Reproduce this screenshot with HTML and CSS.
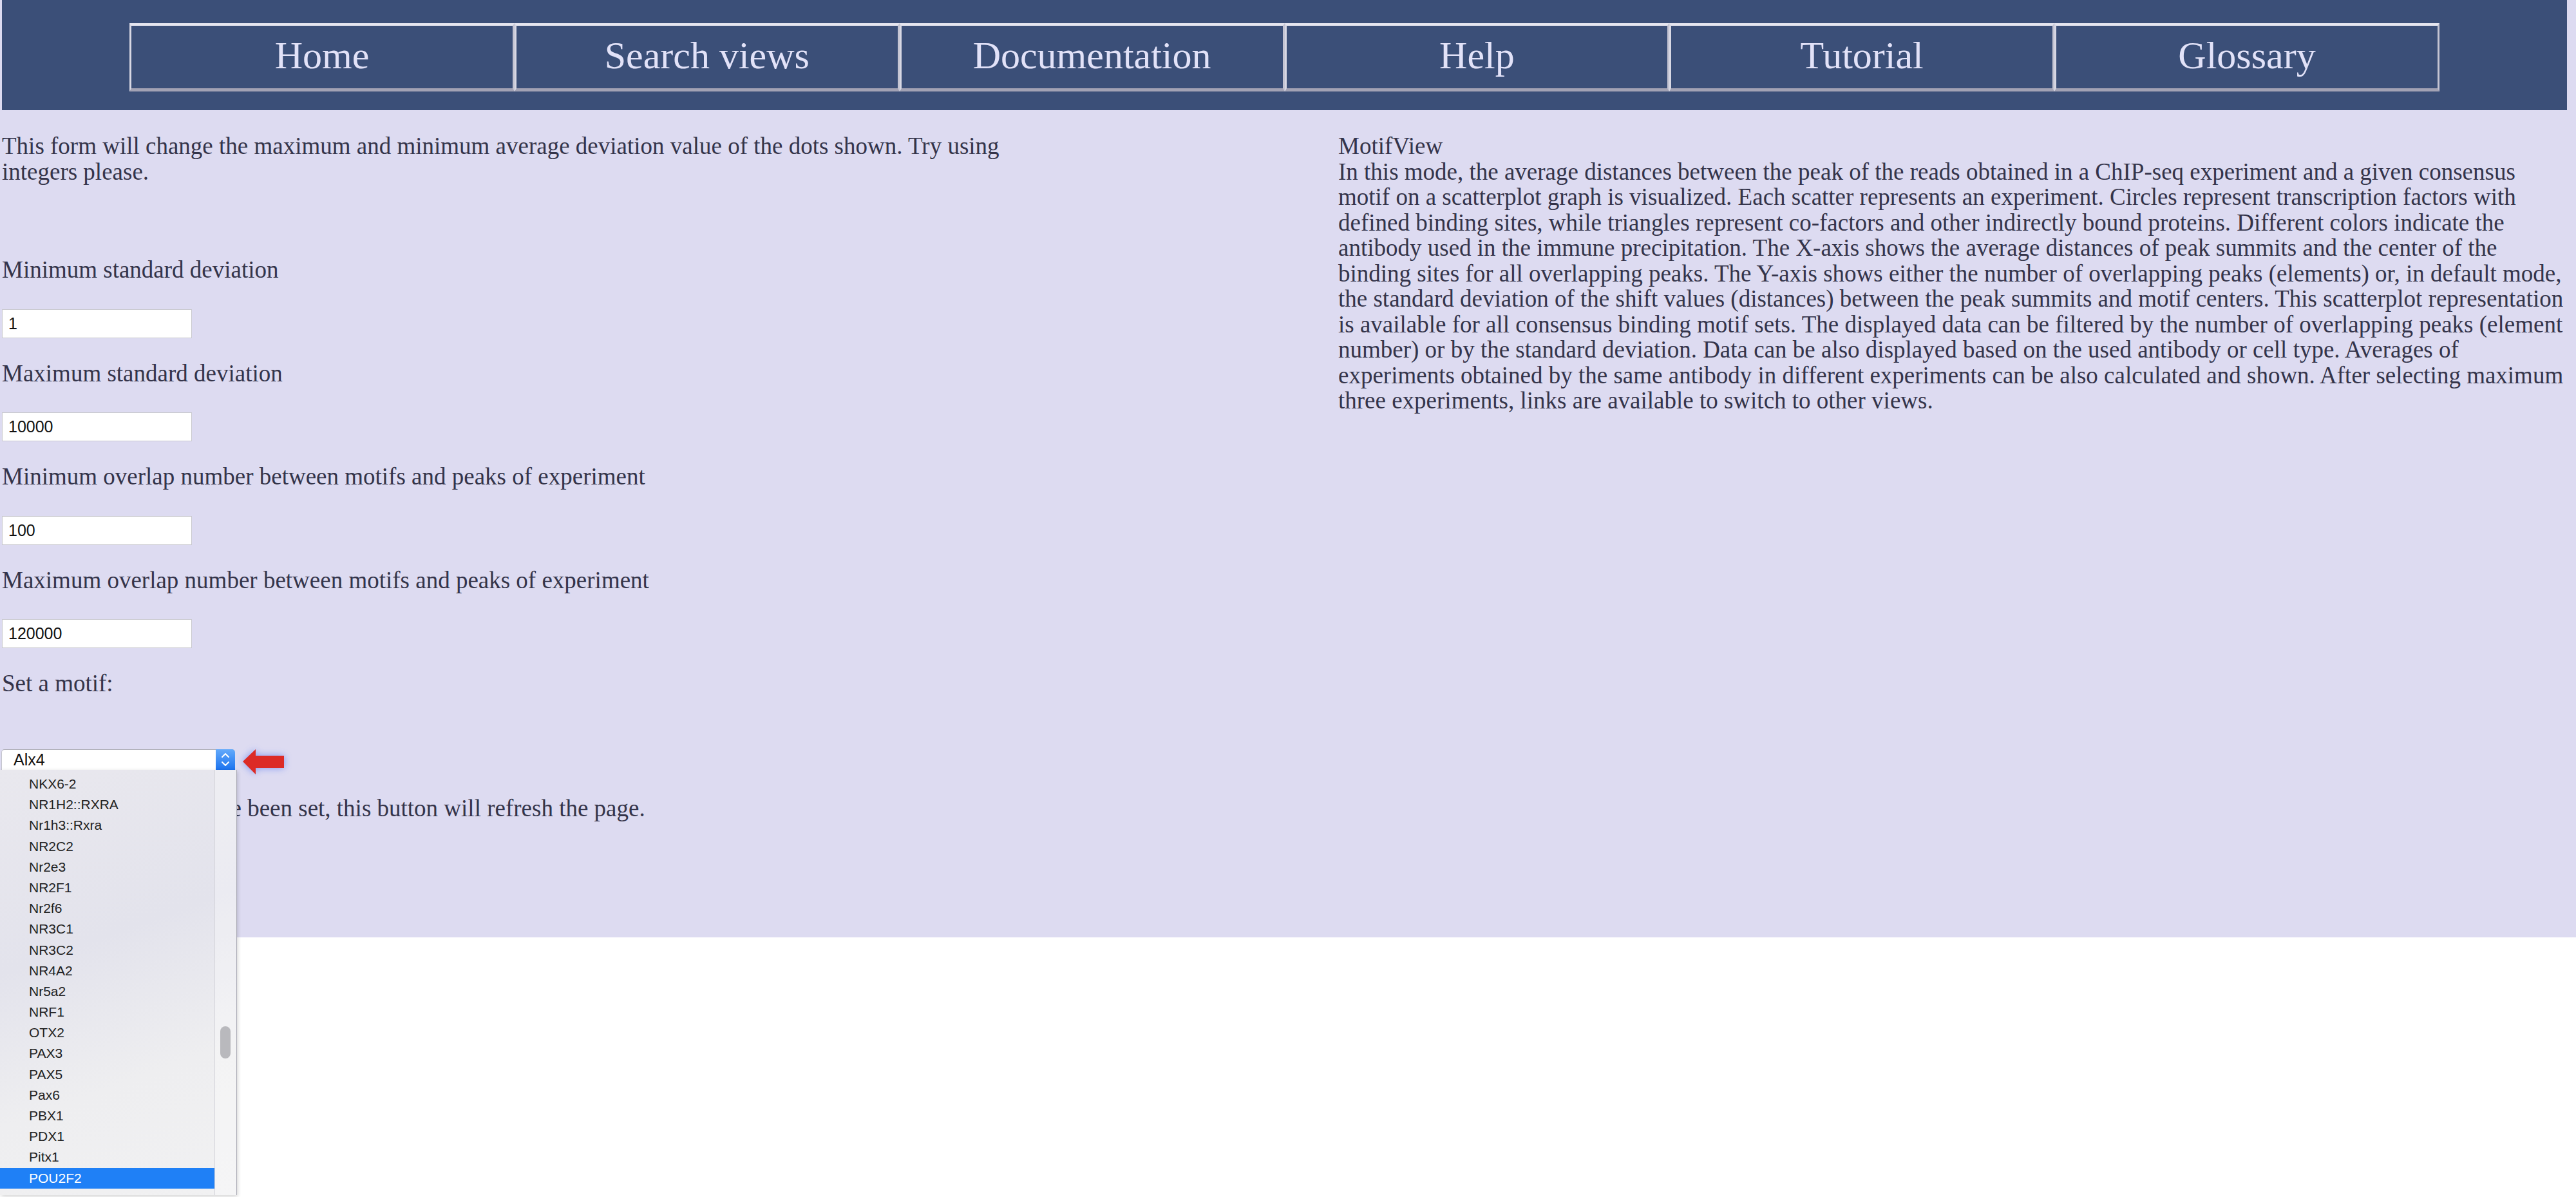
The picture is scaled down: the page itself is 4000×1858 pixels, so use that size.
FILE: index.html
```html
<!DOCTYPE html>
<html lang="en">
<head>
<meta charset="utf-8">
<title>MotifView</title>
<link rel="stylesheet" href="styles.css">
</head>
<body>
<div class="page">
  <nav class="nav">
    <div class="nav-row">
      <a class="nav-btn" href="#">Home</a>
      <a class="nav-btn" href="#">Search views</a>
      <a class="nav-btn" href="#">Documentation</a>
      <a class="nav-btn" href="#">Help</a>
      <a class="nav-btn" href="#">Tutorial</a>
      <a class="nav-btn" href="#">Glossary</a>
    </div>
  </nav>
  <main class="content">
    <section class="form-col">
      <p class="intro">This form will change the maximum and minimum average deviation value of the dots shown. Try using integers please.</p>
      <div class="field">
        <label class="label">Minimum standard deviation</label>
        <input class="num" type="text" value="1">
      </div>
      <div class="field">
        <label class="label">Maximum standard deviation</label>
        <input class="num" type="text" value="10000">
      </div>
      <div class="field">
        <label class="label">Minimum overlap number between motifs and peaks of experiment</label>
        <input class="num" type="text" value="100">
      </div>
      <div class="field">
        <label class="label">Maximum overlap number between motifs and peaks of experiment</label>
        <input class="num" type="text" value="120000">
      </div>
      <p class="label motif-label">Set a motif:</p>
      <div class="select-wrap">
        <div class="select">
          <span class="select-value">Alx4</span>
          <span class="stepper">
            <svg width="30" height="32" viewBox="0 0 30 32"><path d="M10 12 L15 7 L20 12" fill="none" stroke="#fff" stroke-width="2" stroke-linecap="round" stroke-linejoin="round"/><path d="M10 20 L15 25 L20 20" fill="none" stroke="#fff" stroke-width="2" stroke-linecap="round" stroke-linejoin="round"/></svg>
          </span>
        </div>
        <div class="pointer">
          <svg width="90" height="70" viewBox="0 0 90 70">
            <defs><filter id="glow" x="-50%" y="-50%" width="200%" height="200%"><feGaussianBlur stdDeviation="6"/></filter></defs>
            <path d="M13 37 L33 18 L33 28 L77 28 L77 47 L33 47 L33 57 Z" fill="#6d88f0" opacity="0.85" filter="url(#glow)"/>
            <path d="M13 37 L33 18 L33 28 L77 28 L77 47 L33 47 L33 57 Z" fill="#dc2b26"/>
          </svg>
        </div>
        <div class="popup">
          <ul class="options">
            <li>NKX6-2</li>
            <li>NR1H2::RXRA</li>
            <li>Nr1h3::Rxra</li>
            <li>NR2C2</li>
            <li>Nr2e3</li>
            <li>NR2F1</li>
            <li>Nr2f6</li>
            <li>NR3C1</li>
            <li>NR3C2</li>
            <li>NR4A2</li>
            <li>Nr5a2</li>
            <li>NRF1</li>
            <li>OTX2</li>
            <li>PAX3</li>
            <li>PAX5</li>
            <li>Pax6</li>
            <li>PBX1</li>
            <li>PDX1</li>
            <li>Pitx1</li>
            <li class="selected">POU2F2</li>
          </ul>
          <div class="track"></div>
          <div class="thumb"></div>
        </div>
      </div>
      <p class="refresh">When all the values have been set, this button will refresh the page.</p>
    </section>
    <section class="info-col">
      <p class="info">MotifView<br>In this mode, the average distances between the peak of the reads obtained in a ChIP-seq experiment and a given consensus motif on a scatterplot graph is visualized. Each scatter represents an experiment. Circles represent transcription factors with defined binding sites, while triangles represent co-factors and other indirectly bound proteins. Different colors indicate the antibody used in the immune precipitation. The X-axis shows the average distances of peak summits and the center of the binding sites for all overlapping peaks. The Y-axis shows either the number of overlapping peaks (elements) or, in default mode, the standard deviation of the shift values (distances) between the peak summits and motif centers. This scatterplot representation is available for all consensus binding motif sets. The displayed data can be filtered by the number of overlapping peaks (element number) or by the standard deviation. Data can be also displayed based on the used antibody or cell type. Averages of experiments obtained by the same antibody in different experiments can be also calculated and shown. After selecting maximum three experiments, links are available to switch to other views.</p>
    </section>
  </main>
</div>
<div class="below"></div>
</body>
</html>
```

FILE: styles.css
```css
html, body {
  margin: 0;
  padding: 0;
  background: #ffffff;
}

body {
  min-height: 1858px;
  font-family: "Liberation Serif", "Times New Roman", serif;
  color: #34344a;
}

.page {
  position: relative;
  z-index: 1;
  background: #dddbf1;
}

.below {
  height: 403px;
  background: #ffffff;
}

.nav {
  margin: 0 14px 0 3px;
  height: 171px;
  box-sizing: border-box;
  padding-top: 36px;
  background: #3b4f78;
}

.nav-row {
  display: flex;
  justify-content: center;
}

.nav-btn {
  box-sizing: border-box;
  width: 597.8px;
  height: 106px;
  display: flex;
  align-items: center;
  justify-content: center;
  padding-bottom: 4px;
  border-style: solid;
  border-width: 4px 3px 5px 3px;
  border-color: #e6e6f0 #c4c4d2 #a2a2b4 #d8d8e4;
  color: #e2e2f8;
  text-decoration: none;
  font-size: 60px;
  font-family: "Liberation Serif", "Times New Roman", serif;
}

.content {
  display: grid;
  grid-template-columns: 1622px 1fr;
  column-gap: 453px;
  box-sizing: border-box;
  min-height: 1284px;
  padding: 36px 5px 0 3px;
  font-size: 37px;
  line-height: 39.5px;
}

.form-col {
  display: flex;
  flex-direction: column;
  align-items: flex-start;
}

.intro {
  margin: 0 0 113px;
}

.field {
  display: flex;
  flex-direction: column;
  align-items: flex-start;
  margin-bottom: 35px;
}

.label {
  display: block;
  margin: 0 0 41px;
}

.num {
  box-sizing: border-box;
  width: 295px;
  height: 45px;
  margin: 0;
  padding: 0 9px;
  border: 1px solid #c9c9cf;
  background: #ffffff;
  font-family: "Liberation Sans", Arial, sans-serif;
  font-size: 25px;
  color: #111111;
  outline: none;
}

.motif-label {
  margin-bottom: 82.5px;
}

.select-wrap {
  position: relative;
  z-index: 5;
  margin: 0 0 40px -1px;
}

.select {
  box-sizing: border-box;
  width: 363px;
  height: 32px;
  display: flex;
  align-items: center;
  justify-content: space-between;
  background: #ffffff;
  border-top: 1px solid #aeaeb6;
  border-left: 1px solid #c4c4cc;
  border-radius: 5px 5px 0 0;
  font-family: "Liberation Sans", Arial, sans-serif;
  font-size: 25px;
  color: #111111;
}

.select-value {
  padding-left: 18px;
  line-height: 31px;
}

.stepper {
  display: flex;
  width: 30px;
  height: 32px;
  margin-top: -1px;
  border-radius: 0 5px 0 0;
  background: linear-gradient(#63aafb, #1c73ef);
}

.pointer {
  position: absolute;
  left: 362px;
  top: -18px;
  width: 90px;
  height: 70px;
}

.popup {
  position: absolute;
  left: -2px;
  top: 32px;
  z-index: 10;
  width: 367px;
  height: 660px;
  background: linear-gradient(160deg, #e9e8ee 0%, #e3e3ec 40%, #eeeef0 70%, #f1f1f2 100%);
  box-shadow: 1px 0 0 #a9a9b4, 2px 2px 6px rgba(0, 0, 0, 0.18);
}

.options {
  list-style: none;
  margin: 0;
  padding: 6px 0 0;
  width: 333px;
  font-family: "Liberation Sans", Arial, sans-serif;
  font-size: 21px;
  color: #222222;
}

.options li {
  box-sizing: border-box;
  height: 32.2px;
  line-height: 32.2px;
  padding-left: 45px;
}

.options li.selected {
  background: #1f80f6;
  color: #ffffff;
}

.track {
  position: absolute;
  left: 333px;
  top: 0;
  width: 34px;
  height: 100%;
  box-sizing: border-box;
  border-left: 1px solid #d4d4da;
  background: rgba(255, 255, 255, 0.3);
}

.thumb {
  position: absolute;
  left: 342px;
  top: 398px;
  width: 16px;
  height: 50px;
  border-radius: 8px;
  background: #b9b9bd;
}

.refresh {
  margin: 0;
}

.info-col {
  min-width: 0;
}

.info {
  margin: 0;
}
```
